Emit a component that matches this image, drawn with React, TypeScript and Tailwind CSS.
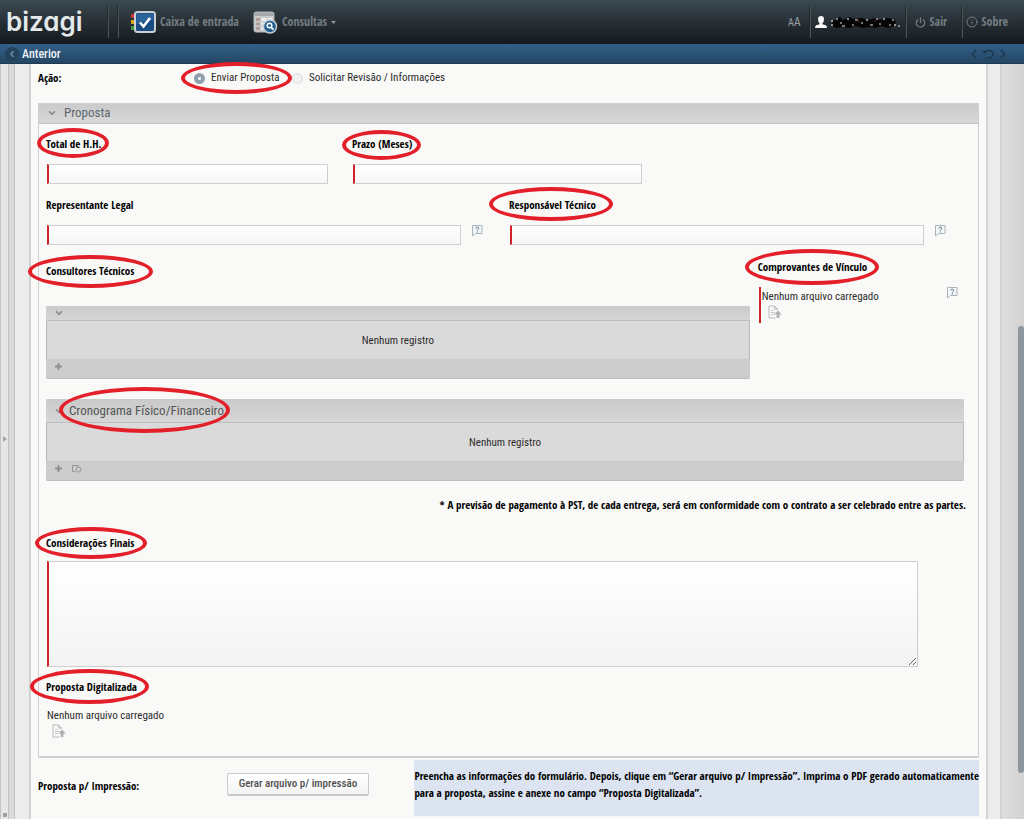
import type { ReactNode } from 'react';
import { ChevronDown, ChevronLeft, ChevronRight, Info, Plus, Power } from 'lucide-react';

const inputClass =
  'h-5 min-w-0 border border-[#cfcfd2] border-l-2 border-l-[#d0222b] bg-linear-to-b from-white to-[#f6f6f6] px-1 text-[11px] outline-none';

function Mark({ className }: { className: string }) {
  return (
    <span
      aria-hidden="true"
      className={`pointer-events-none absolute z-10 rounded-[50%] border-[4px] border-[#e3202a] ${className}`}
    />
  );
}

interface FieldLabelProps {
  htmlFor?: string;
  mark?: string;
  children: ReactNode;
}

function FieldLabel({ htmlFor, mark, children }: FieldLabelProps) {
  return (
    <div className="relative h-4">
      <label htmlFor={htmlFor} className="block font-['Open_Sans_Condensed','Roboto_Condensed',sans-serif] font-bold whitespace-nowrap text-black">
        {children}
      </label>
      {mark && <Mark className={mark} />}
    </div>
  );
}

function HelpIcon() {
  return (
    <button type="button" aria-label="Ajuda" className="h-3 w-3 shrink-0">
      <svg viewBox="0 0 12 12" className="block size-3">
        <path d="M1.5 .5h9.500v8H4.500l-3 2.500z" fill="#f4f7f9" stroke="#a9b4bb" />
        <path d="M4.800 3.500q0-1.300 1.500-1.300t1.400 1.300q0 .7-.8 1.100-.6.300-.6.900M6.300 6.500v1" fill="none" stroke="#5b7286" />
      </svg>
    </button>
  );
}

function UploadButton({ label }: { label: string }) {
  return (
    <button type="button" aria-label={label} className="block h-[14px] w-[14px]">
      <svg viewBox="0 0 14 14" className="block size-[14px]">
        <path d="M9.500 5V4l-3-3H1v12h6.500M6.500 1v3h3" fill="none" stroke="#b8b8b8" />
        <path d="M3 5.500h2.500M3 7.500h4M3 9.500h3" stroke="#c6c6c6" />
        <path d="M10 5.500l3.800 4h-2.400V13H8.600V9.500H6.200z" fill="#b0b0b0" />
      </svg>
    </button>
  );
}

function InboxIcon() {
  return (
    <svg viewBox="0 0 25 22" className="h-[22px] w-[25px]">
      <path d="M0 3h4v4H0z" fill="#c8382e" />
      <path d="M0 9h4v4H0z" fill="#d9a521" />
      <path d="M0 15h4v4H0z" fill="#3f9a3d" />
      <rect x="4" y="1" width="20" height="20" rx="2.500" fill="#1a4b80" stroke="#c9d0d6" strokeWidth="2" />
      <path d="M5.500 2.500h17v7q-8 0-17 4z" fill="#2b6199" />
      <path d="M9 11.500l3.500 4 6.500-8.500" fill="none" stroke="#fff" strokeWidth="2.600" />
    </svg>
  );
}

function QueryIcon() {
  return (
    <svg viewBox="0 0 25 23" className="h-[23px] w-[25px]">
      <rect x="1" y="1" width="20" height="20" rx="2" fill="#c9cccd" stroke="#b3b6b8" />
      <path d="M1.500 3q0-1.500 1.500-1.500h16q1.500 0 1.500 1.500v2h-19z" fill="#a3a7aa" />
      <path d="M3 7h4v3H3zM3 11.500h4v3H3zM3 16h4v3H3z" fill="#b39c98" />
      <path d="M8.500 7h5v3h-5zM15 7h4.500v3H15zM8.500 11.500h3v3h-3zM8.500 16h2v3h-2z" fill="#efefef" />
      <circle cx="17" cy="15.500" r="6.500" fill="#245f92" stroke="#c3ced6" strokeWidth="1.500" />
      <circle cx="16.500" cy="14.500" r="2.300" fill="none" stroke="#fff" strokeWidth="1.500" />
      <path d="M18 16.200l2.500 2.500" stroke="#fff" strokeWidth="1.800" />
    </svg>
  );
}

// user name is scribbled over
function HiddenName() {
  return (
    <svg viewBox="0 0 70 14" className="h-[14px] w-[70px]">
      <path
        d="M2 6l7-4 3 3 6-3 5 2 8-1 6 2 7-2 4 2 7-2 8 1 2 3-2 4-6 2-7-2-5 2-7-1-6 1-8-2-5 2-8-1-6 1-5-3z"
        fill="#050505"
      />
      <path
        d="M1 5v2M1 9v2M5 4h2M9 8h2M11 11h3M17 3v2M21 10h2M24 5h3M30 8h2M36 4v2M39 10h3M45 4h2M48 9h2M53 3v2M58 10h2M61 5h2M64 9v2M67 11h2"
        stroke="#dfe3e5"
        strokeWidth="1.200"
      />
      <path d="M26 6h3M43 6h2" stroke="#6d1f22" />
    </svg>
  );
}

function Separator() {
  return <div className="h-8 w-0.5 border-r border-l border-r-[#49545b] border-l-[#20282c]" />;
}

function Header() {
  return (
    <header>
      <div className="flex h-11 items-center justify-between bg-linear-to-b from-[#3b4950] to-[#15191d] font-['Open_Sans_Condensed','Roboto_Condensed',sans-serif] text-[12px] font-bold text-[#747d82]">
        <div className="flex h-full items-center">
          <div className="w-[100px] pl-[6px] font-['Inter',sans-serif] text-[26px] leading-10 font-semibold text-[#e3e8eb] [font-feature-settings:'cv11']">
            bizagi
          </div>
          <div className="flex gap-2 pl-[7px]">
            <Separator />
            <Separator />
          </div>
          <nav className="flex items-center pl-3">
            <a href="#caixa" className="flex w-[122px] items-center gap-1">
              <InboxIcon />
              Caixa de entrada
            </a>
            <a href="#consultas" className="flex items-center gap-1">
              <QueryIcon />
              Consultas
              <svg viewBox="0 0 5 3" className="h-[3px] w-[5px]">
                <path d="M0 0h5L2.500 3z" fill="#8b9499" />
              </svg>
            </a>
          </nav>
        </div>
        <div className="flex items-center pr-4">
          <button type="button" className="mr-2 font-['Roboto_Condensed',sans-serif] font-normal text-[#98a0a4]">
            <span className="text-[10px]">A</span>A
          </button>
          <Separator />
          <div className="flex items-center gap-1 pr-1 pl-1">
            <svg viewBox="0 0 12 12" className="size-3">
              <path d="M6 0q3 0 3 3.200Q9 6 7.500 7v1.300l3.300 1q1.200.5 1.200 2.700H0q0-2.200 1.200-2.700l3.300-1V7Q3 6 3 3.200 3 0 6 0z" fill="#f4f6f7" />
            </svg>
            <HiddenName />
          </div>
          <Separator />
          <button type="button" className="flex w-[54px] items-center gap-1 pl-2">
            <Power size={11} strokeWidth={3} />
            Sair
          </button>
          <Separator />
          <button type="button" className="flex items-center gap-1 pl-[3px]">
            <Info size={12} strokeWidth={2} />
            Sobre
          </button>
        </div>
      </div>
      <div className="flex h-5 items-center justify-between border-b border-[#1d3a52] bg-linear-to-b from-[#34608a] to-[#234663] pr-[14px] pl-[5px]">
        <a href="#anterior" className="flex items-center gap-[3px] font-['Roboto_Condensed',sans-serif] text-[12px] font-medium text-[#eef2f5]">
          <span className="flex size-[14px] items-center justify-center rounded-full bg-[#24435c]">
            <ChevronLeft size={10} strokeWidth={3} className="text-[#7f96a8]" />
          </span>
          Anterior
        </a>
        <div className="flex items-center gap-0.5 text-[#1b3850]">
          <ChevronLeft size={14} strokeWidth={3} />
          <svg viewBox="0 0 11 10" className="h-[10px] w-[11px]" fill="none" stroke="currentColor" strokeWidth="1.500">
            <path d="M1 3.500V1M1 3.500h2.500M1.500 3.500Q3.500 1 6.500 1.500 10 2.200 10 5.500 9.500 9 5.500 9H4" />
          </svg>
          <ChevronRight size={14} strokeWidth={3} />
        </div>
      </div>
    </header>
  );
}

interface RecordGridProps {
  title?: string;
  canCopy?: boolean;
}

function RecordGrid({ title, canCopy }: RecordGridProps) {
  return (
    <section className="rounded-[2px] bg-[#cccccc]">
      <div className={`flex items-center rounded-t-[2px] border-b border-[#bebebe] bg-linear-to-b from-[#cacaca] to-[#d6d6d6] pl-2 ${title ? 'h-6' : 'h-[15px]'}`}>
        <button type="button" aria-label="Recolher">
          <ChevronDown size={10} strokeWidth={4} className="text-[#8a8a8a]" />
        </button>
        {title && (
          <h3 className="relative ml-[5px] text-[13px] leading-4 text-[#565656]">
            {title}
            <Mark className="-top-4 -left-[10px] h-[46px] w-[171px]" />
          </h3>
        )}
      </div>
      <div className="flex h-[38px] items-center justify-center border-x border-[#b8b8b8] bg-[#dadada] pt-0.5">
        Nenhum registro
      </div>
      <div className="flex h-5 items-center gap-2 rounded-b-[2px] border-b border-[#bdbdbd] pb-1 pl-2 text-[#8c8c8c]">
        <button type="button" aria-label="Adicionar">
          <Plus size={9} strokeWidth={5} />
        </button>
        {canCopy && (
          <button type="button" aria-label="Copiar">
            <svg viewBox="0 0 11 9" className="h-[9px] w-[11px]" fill="none" stroke="#949494">
              <path d="M4 7.500H1.500v-6H7V3" />
              <circle cx="7.500" cy="5.500" r="2.500" />
            </svg>
          </button>
        )}
      </div>
    </section>
  );
}

function ProposalForm() {
  return (
    <section className="rounded-b-[2px] border border-b-2 border-[#d0d0d0]">
      <div className="flex h-5 items-center border-b border-[#bfbfbf] bg-linear-to-b from-[#cbcbcb] to-[#d8d8d8] pb-0.5 pl-2">
        <button type="button" aria-label="Recolher">
          <ChevronDown size={10} strokeWidth={4} className="text-[#8a8a8a]" />
        </button>
        <h2 className="ml-[7px] text-[13px] text-[#5d6770]">Proposta</h2>
      </div>

      <div className="pt-3 pr-1.5 pb-[18px] pl-[7px]">
        <div className="grid grid-cols-3 pr-2">
          <div className="flex flex-col gap-3 pr-6">
            <FieldLabel htmlFor="total" mark="-left-[9px] -top-2 h-[30px] w-[72px]">Total de H.H.</FieldLabel>
            <input id="total" className={`${inputClass} ml-px`} />
          </div>
          <div className="flex flex-col gap-3 pr-4">
            <FieldLabel htmlFor="prazo" mark="-left-[10px] -top-1.5 h-[30px] w-[79px]">Prazo (Meses)</FieldLabel>
            <input id="prazo" className={`${inputClass} ml-px`} />
          </div>
        </div>

        <div className="grid grid-cols-2 pt-[13px]">
          <div className="flex flex-col gap-3">
            <FieldLabel htmlFor="representante">Representante Legal</FieldLabel>
            <div className="flex gap-[10px] pr-[26px] pl-px">
              <input id="representante" className={`${inputClass} flex-1`} />
              <HelpIcon />
            </div>
          </div>
          <div className="flex flex-col gap-3">
            <FieldLabel htmlFor="responsavel" mark="-left-5 -top-[10px] h-[34px] w-[124px]">Responsável Técnico</FieldLabel>
            <div className="flex gap-[10px] pr-[26px] pl-px">
              <input id="responsavel" className={`${inputClass} flex-1`} />
              <HelpIcon />
            </div>
          </div>
        </div>

        <div className="flex pt-[14px]">
          <div className="flex w-[76%] flex-col gap-[27px] pt-1">
            <FieldLabel mark="-left-[18px] -top-2 h-[33px] w-[125px]">Consultores Técnicos</FieldLabel>
            <RecordGrid />
          </div>
          <div className="flex flex-1 flex-col gap-3 pl-2">
            <FieldLabel mark="-left-[13px] -top-[10px] h-9 w-[134px]">Comprovantes de Vínculo</FieldLabel>
            <div className="flex justify-between pr-[14px] pl-px">
              <div className="h-9 border-l-2 border-[#d0222b] pl-px">
                <p className="pt-0.5">Nenhum arquivo carregado</p>
                <div className="pl-1.5">
                  <UploadButton label="Carregar comprovante" />
                </div>
              </div>
              <HelpIcon />
            </div>
          </div>
        </div>

        <div className="pt-5 pr-2">
          <RecordGrid title="Cronograma Físico/Financeiro" canCopy />
        </div>

        <p className="pt-4 pr-1.5 text-right font-['Open_Sans_Condensed','Roboto_Condensed',sans-serif] font-bold text-black">
          * A previsão de pagamento à PST, de cada entrega, será em conformidade com o contrato a ser celebrado entre as partes.
        </p>

        <div className="flex flex-col gap-[10px] pt-[22px]">
          <FieldLabel htmlFor="consideracoes" mark="-left-[11px] -top-2 h-8 w-28">Considerações Finais</FieldLabel>
          <textarea
            id="consideracoes"
            className="mr-[54px] ml-px h-[106px] resize border border-l-2 border-[#cfcfd2] border-l-[#d0222b] bg-linear-to-b from-white to-[#f3f3f3] outline-none"
          />
        </div>

        <div className="pt-3">
          <FieldLabel mark="-left-4 -top-[10px] h-[35px] w-[119px]">Proposta Digitalizada</FieldLabel>
          <p className="pt-[13px] pl-px">Nenhum arquivo carregado</p>
          <div className="pl-1.5">
            <UploadButton label="Carregar proposta" />
          </div>
        </div>
      </div>
    </section>
  );
}

export default function App() {
  return (
    <div className="flex min-h-screen flex-col bg-[#f9f9f7] font-['Roboto_Condensed','Roboto',sans-serif] text-[11px] leading-4 text-[#2c2c2c]">
      <Header />
      <div className="flex flex-1">
        {/* Collapsed side panel */}
        <div className="flex w-2 flex-col items-center justify-between border-l border-[#c4c4c4] bg-[#e6e6e6] pb-0.5">
          <span />
          <svg viewBox="0 0 4 6" className="h-1.5 w-1">
            <path d="M0 0l4 3-4 3z" fill="#a5a5a5" />
          </svg>
          <span className="size-1 bg-[#a0a0a0]" />
        </div>
        <div className="w-[7px] border-x border-[#c3c3c3] bg-[#d9d9d9]" />
        <div className="w-4 border-r-2 border-[#d0d0d0] bg-[#ececec]" />

        <main className="min-w-0 flex-1 pr-[7px] pl-[7px]">
          <div className="flex h-[39px] items-center pb-[11px]">
            <span className="w-[156px] font-['Open_Sans_Condensed','Roboto_Condensed',sans-serif] font-bold text-black">Ação:</span>
            <label className="relative flex w-[98px] items-center gap-[6px] whitespace-nowrap">
              <input
                type="radio"
                name="acao"
                defaultChecked
                className="size-[11px] appearance-none rounded-full border-[4px] border-[#8fa0ac] bg-white"
              />
              Enviar Proposta
              <Mark className="-top-2 -left-[13px] h-8 w-[111px]" />
            </label>
            <label className="flex items-center gap-[6px] whitespace-nowrap">
              <input
                type="radio"
                name="acao"
                className="size-[11px] appearance-none rounded-full border border-[#dcdcdc] bg-[#f1f1f1]"
              />
              Solicitar Revisão / Informações
            </label>
          </div>

          <ProposalForm />

          <div className="flex pt-0.5 pb-[3px]">
            <div className="flex w-[40%] items-start pt-[13px]">
              <span className="w-[189px] pt-[5px] font-['Open_Sans_Condensed','Roboto_Condensed',sans-serif] font-bold text-black">
                Proposta p/ Impressão:
              </span>
              <button
                type="button"
                className="h-[23px] w-[142px] rounded-[2px] border border-b-2 border-[#c9c9c9] bg-linear-to-b from-white to-[#f3f3f3] font-medium text-[#4f4f4f]"
              >
                Gerar arquivo p/ impressão
              </button>
            </div>
            <p className="h-14 flex-1 bg-[#dbe4f0] pt-[7px] font-['Open_Sans_Condensed','Roboto_Condensed',sans-serif] leading-[17px] font-bold text-black">
              Preencha as informações do formulário. Depois, clique em “Gerar arquivo p/ Impressão”. Imprima o PDF gerado automaticamente
              para a proposta, assine e anexe no campo “Proposta Digitalizada”.
            </p>
          </div>
        </main>

        <div className="w-4 border-x-2 border-[#d3d3d3] bg-[#ececec]" />
        <div className="flex w-[22px] flex-col items-end bg-linear-to-r from-[#dedede] to-[#d2d2d2]">
          <div className="flex-[262]" />
          <div className="w-1.5 flex-[448] rounded-full bg-[#8b969e]" />
          <div className="flex-[46]" />
        </div>
      </div>
    </div>
  );
}
